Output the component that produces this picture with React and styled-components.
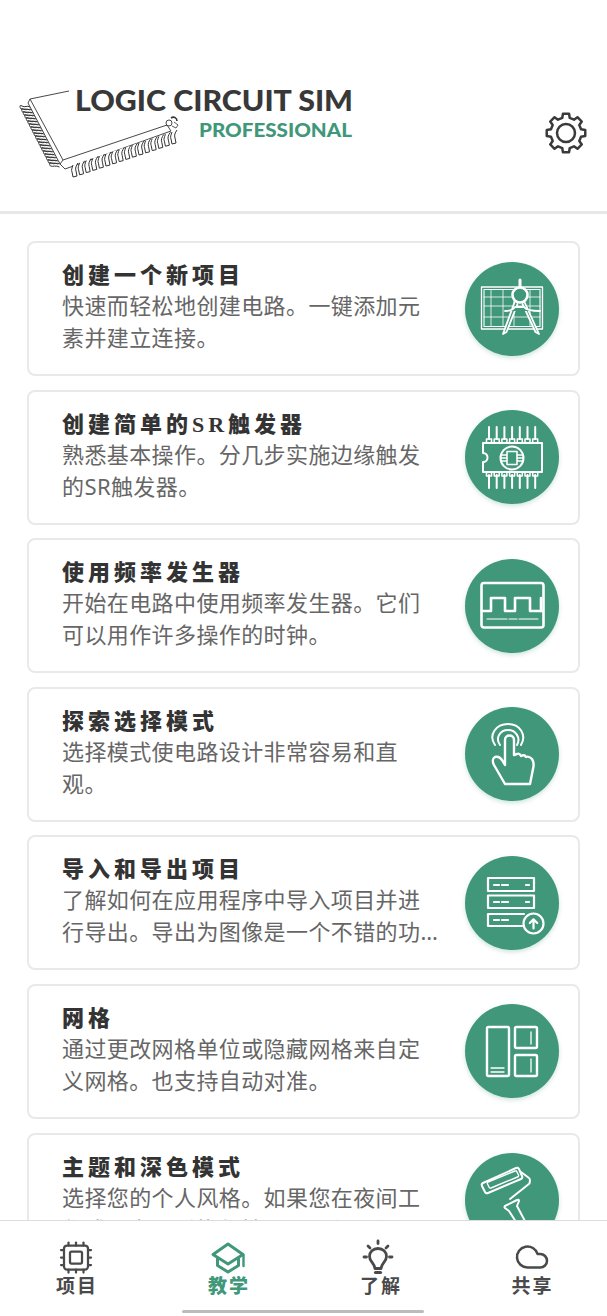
import React from "react";
import styled, { createGlobalStyle } from "styled-components";
import { Cloud, Cpu } from "lucide-react";

const GREEN = "#41977a";
const INK = "#3a3a3a";

const GlobalStyle = createGlobalStyle`
  html, body {
    margin: 0;
    padding: 0;
    background: #fff;
  }
  * {
    box-sizing: border-box;
  }
`;

const Screen = styled.div`
  width: 607px;
  height: 1316px;
  display: flex;
  flex-direction: column;
  overflow: hidden;
  background: #fff;
  font-family: "Noto Sans", "Noto Sans CJK SC", sans-serif;
`;

const Header = styled.header`
  flex: none;
  height: 214px;
  display: flex;
  align-items: flex-start;
  justify-content: space-between;
  padding: 85px 19px 0 16px;
  border-bottom: 3px solid #e8e8e8;
`;

const GearButton = styled.div`
  width: 44px;
  height: 44px;
  margin-top: 26px;
  color: ${INK};
`;

const List = styled.main`
  flex: 1;
  min-height: 0;
  overflow: hidden;
  display: flex;
  flex-direction: column;
  gap: 13.6px;
  padding: 27px 27px 0;
`;

const Card = styled.article`
  flex: none;
  height: 135px;
  display: flex;
  align-items: center;
  justify-content: space-between;
  padding: 0 19px 0 33px;
  border: 2px solid #e9e9e9;
  border-radius: 8px;
  background: #fff;
`;

const CardText = styled.div`
  width: 378px;
  margin-top: -6px;
`;

const CardTitle = styled.h2`
  margin: 2px 0 -2px;
  font-family: "Liberation Serif", "Noto Sans CJK SC", serif;
  font-size: 22px;
  font-weight: 900;
  line-height: 31px;
  letter-spacing: 4px;
  color: #333;
`;

const CardBody = styled.p`
  margin: 0;
  font-size: 22px;
  font-weight: 400;
  line-height: 32px;
  letter-spacing: 0.4px;
  color: #666;
  display: -webkit-box;
  -webkit-box-orient: vertical;
  -webkit-line-clamp: 2;
  overflow: hidden;
`;

const IconCircle = styled.div`
  flex: none;
  width: 94px;
  height: 94px;
  display: flex;
  align-items: center;
  justify-content: center;
  border-radius: 50%;
  background: ${GREEN};
  box-shadow: 0 2px 4px rgba(65, 151, 122, 0.25);
  color: #fff;
`;

const Nav = styled.nav`
  flex: none;
  height: 96px;
  display: grid;
  grid-template-columns: 152px 152px 152px 151px;
  border-top: 1px solid #dcdcdc;
  background: #fff;
  position: relative;
`;

const NavItem = styled.div`
  display: flex;
  flex-direction: column;
  align-items: center;
  padding-top: 18px;
  color: ${(p) => (p.$active ? GREEN : "#4a4a4a")};
`;

const NavIconBox = styled.div`
  width: 36px;
  height: 36px;
  display: flex;
  align-items: center;
  justify-content: center;
`;

const NavLabel = styled.span`
  margin-top: -2px;
  margin-right: -2px;
  font-family: "Noto Sans CJK SC", sans-serif;
  font-size: 19px;
  font-weight: ${(p) => (p.$active ? 900 : 700)};
  line-height: 24px;
  letter-spacing: 2px;
`;

const HomeBar = styled.div`
  position: absolute;
  left: 182px;
  bottom: 3px;
  width: 242px;
  height: 3px;
  border-radius: 2px;
  background: #bcbcbc;
`;

const Line = (props) => (
  <svg
    viewBox="0 0 64 64"
    width="64"
    height="64"
    fill="none"
    stroke="currentColor"
    strokeWidth="2"
    strokeLinecap="round"
    strokeLinejoin="round"
    style={{ overflow: "visible" }}
    {...props}
  />
);

const range = (n) => Array.from({ length: n }, (_, i) => i);

const BlueprintIcon = () => (
  <Line>
    <path d="M1.500 10h61v42h-61z" strokeWidth="1.300" />
    <path d="M4 12.500h56v37H4z" strokeWidth="1.100" />
    <path d="M4 20h56M4 29h56M4 40h56M11 12.500v37M23 12.500v37M34 12.500v37M50 12.500v37" strokeWidth="0.800" />
    <path d="M40 3v6" strokeWidth="3" />
    <path d="M35 24 23 57l3.500-2 11-28M44 24l15 33-3.500-2-13-28" fill={GREEN} strokeWidth="1.800" />
    <circle cx="40" cy="18" r="7.500" fill={GREEN} strokeWidth="2.600" />
    <path d="M25 34c5 0 8-1 10-4h9c2 3 6 4 16 4" fill={GREEN} strokeWidth="1.800" />
  </Line>
);

const ChipIcon = () => (
  <Line>
    {range(7).map((i) => (
      <g key={i}>
        <path d={`M${9 + i * 7.7} 2v12M${9 + i * 7.7} 50v13`} strokeWidth="2" />
        <path d={`M${6.5 + i * 7.7} 18v-4h5v4M${6.5 + i * 7.7} 47v4h5v-4`} strokeWidth="1.500" />
      </g>
    ))}
    <path d="M3 18h59v29H3v-10a4.500 4.500 0 0 0 0-9z" strokeWidth="2" />
    <circle cx="32" cy="33" r="11.500" strokeWidth="2" />
    <path d="M27 26.500h10v13H27zM21 30h6M21 33h6M21 36h6M37 30h6M37 33h6M37 36h6" strokeWidth="1.600" />
  </Line>
);

const WaveIcon = () => (
  <Line>
    <rect x="1.500" y="9" width="62" height="44.500" rx="2.500" strokeWidth="2.600" />
    <path d="M2 37h9V24h14v13h10V24h15v13h13" strokeWidth="2.600" />
    <path d="M61 24v13" strokeWidth="2.600" />
    <path d="M7 45h20M29 45h8M39 45h19" strokeWidth="1.200" />
  </Line>
);

const TapIcon = () => (
  <Line>
    <path d="M25 62 14 43c-2-4-1-7 1-8 3-1 5 0 7 3l3 5V18c0-6 9-6 9 0v15l3-1c2-1 3 0 4 2 2-1 4-1 5 1 2-1 4 0 6 2 2 3 2 6 1 10l-3 15z" strokeWidth="2.400" />
    <path d="M15 23C8 13 16 2 28 2s19 11 13 21" strokeWidth="2" />
    <path d="M20 23c-5-7 0-15 8-15s13 8 9 15" strokeWidth="2" />
  </Line>
);

const ServerIcon = () => (
  <Line>
    <path d="M8 7h46v13H8zM8 24.500h46V37H8zM44 43H8v12h34" strokeWidth="2.200" />
    <path d="M14 14h5M22 14h6M46 14h3M14 31h5M22 31h6M46 31h3M14 49h5M22 49h6" strokeWidth="2.200" />
    <circle cx="53.500" cy="52.500" r="10" fill={GREEN} strokeWidth="2.200" />
    <path d="M53.500 57.500v-9M49.800 52 53.500 48.300 57.200 52" strokeWidth="2.200" />
  </Line>
);

const PanelsIcon = () => (
  <Line>
    <rect x="7" y="8" width="22" height="49" rx="1.500" strokeWidth="2.400" />
    <rect x="35" y="8" width="22" height="21" rx="1.500" strokeWidth="2.400" />
    <rect x="35" y="36" width="22" height="21" rx="1.500" strokeWidth="2.400" />
    <path d="M11 49h13M11 53h13M51 13v12M51 40v13" strokeWidth="1.300" />
  </Line>
);

const RollerIcon = () => (
  <Line>
    <path d="M3 15 36 0q2-1 3 1l3 7q1 2-1 3L8 25q-2 1-3-1l-3-6q-1-2 1-3z" strokeWidth="2" />
    <path d="M8 14 35 3q1.500-.5 2 1l1.500 3q.5 1.500-1 2L11 20q-1.500.5-2-1l-1.500-3q-.5-1.500.5-2z" strokeWidth="1.400" />
    <path d="M41 4l8 6q1.500 1 .5 5.500L30 31" strokeWidth="2" />
    <path d="M25 38l12-6q2-1 2 1l-2 5 9 17M25 38q-1 1 0 2l4 3 9 14" strokeWidth="2" />
  </Line>
);

// gear outline built from eight evenly spaced teeth, one pointing straight up
const gearPath = () => {
  const pt = (r, deg) => {
    const a = ((deg - 90) * Math.PI) / 180;
    return `${(22 + r * Math.cos(a)).toFixed(2)} ${(22 + r * Math.sin(a)).toFixed(2)}`;
  };
  const parts = range(8).flatMap((i) => {
    const a = i * 45;
    return [pt(15.5, a - 14), pt(19.5, a - 9), pt(19.5, a + 9), pt(15.5, a + 14)];
  });
  return `M${parts.join("L")}Z`;
};

const GearIcon = () => (
  <svg viewBox="0 0 44 44" width="44" height="44" fill="none" stroke="currentColor" strokeWidth="2.500" strokeLinejoin="round">
    <path d={gearPath()} />
    <circle cx="22" cy="22" r="9" />
  </svg>
);

const CapIcon = () => (
  <svg viewBox="0 0 36 36" width="36" height="36" fill="none" stroke="currentColor" strokeWidth="3" strokeLinejoin="round" strokeLinecap="round">
    <path d="M18 5 3 15.500 18 25l15-9.500z" />
    <path d="M7.500 19v7.500L18 33l10.500-6.500V19" />
    <path d="M33.500 16v11" strokeWidth="2.400" />
  </svg>
);

const BulbIcon = () => (
  <svg viewBox="0 0 36 36" width="36" height="36" fill="none" stroke="currentColor" strokeWidth="2.800" strokeLinecap="round" strokeLinejoin="round">
    <path d="M16 2v2.500M6 7l2 2M26 7l-2 2M2 18h2.500M27.500 18H30" />
    <path d="M16 9.500c-5 0-8.500 3.500-8.500 8 0 5 5 6.500 5.500 12h6c.5-5.500 5.500-7 5.500-12 0-4.500-3.500-8-8.500-8z" />
    <path d="M13.500 33.500h5" strokeWidth="3.200" />
  </svg>
);

const ChipLogo = () => (
  <svg viewBox="0 0 340 100" width="340" height="100" fill="none" stroke="#333" strokeLinejoin="round">
    <path d="M53 6 14 14 47 75 151 40" strokeWidth="0.900" />
    <path d="M14 14 12 18 44 79 47 75M44 79l5 5 106-38-4-6" strokeWidth="0.900" />
    {range(20).map((i) => (
      <path
        key={`l${i}`}
        d={`M${14 + i * 1.55} ${22 + i * 3}c-3-2-5 1-8-1s-2 2-1 3c3 1 5-1 9 1`}
        strokeWidth="1"
      />
    ))}
    {range(16).map((i) => (
      <path
        key={`b${i}`}
        d={`M${57 + i * 6.6} ${80 - i * 2.2}c-1 3-2 5-1 7l1 5 4-1-1-5c-1-3 0-5 2-8`}
        fill="#fff"
        strokeWidth="1"
      />
    ))}
    <circle cx="153" cy="38" r="3" strokeWidth="0.900" />
    <path d="M155 33c3-2 6 0 6 3" strokeWidth="1.600" />
    <path d="M158 37l4 3-2 3-4-2" strokeWidth="0.800" />
    <text x="59" y="26" textLength="278" lengthAdjust="spacingAndGlyphs" fill="#383838" stroke="none" fontFamily="Lato, sans-serif" fontWeight="900" fontSize="29">
      LOGIC CIRCUIT SIM
    </text>
    <text x="183" y="52" textLength="153" lengthAdjust="spacingAndGlyphs" fill={GREEN} stroke="none" fontFamily="Lato, sans-serif" fontWeight="900" fontSize="19">
      PROFESSIONAL
    </text>
  </svg>
);

const lessons = [
  { title: "创建一个新项目", body: "快速而轻松地创建电路。一键添加元素并建立连接。", Icon: BlueprintIcon },
  { title: "创建简单的SR触发器", body: "熟悉基本操作。分几步实施边缘触发的SR触发器。", Icon: ChipIcon },
  { title: "使用频率发生器", body: "开始在电路中使用频率发生器。它们可以用作许多操作的时钟。", Icon: WaveIcon },
  { title: "探索选择模式", body: "选择模式使电路设计非常容易和直观。", Icon: TapIcon },
  { title: "导入和导出项目", body: "了解如何在应用程序中导入项目并进行导出。导出为图像是一个不错的功能，值得一试。", Icon: ServerIcon },
  { title: "网格", body: "通过更改网格单位或隐藏网格来自定义网格。也支持自动对准。", Icon: PanelsIcon },
  { title: "主题和深色模式", body: "选择您的个人风格。如果您在夜间工作或不为人后悔保持，可以使用深", Icon: RollerIcon },
];

const tabs = [
  { label: "项目", icon: <Cpu size={37} strokeWidth={1.5} /> },
  { label: "教学", icon: <CapIcon />, active: true },
  { label: "了解", icon: <BulbIcon /> },
  { label: "共享", icon: <Cloud size={38} strokeWidth={1.7} /> },
];

export default function App() {
  return (
    <Screen>
      <GlobalStyle />
      <Header>
        <ChipLogo />
        <GearButton>
          <GearIcon />
        </GearButton>
      </Header>
      <List>
        {lessons.map(({ title, body, Icon }) => (
          <Card key={title}>
            <CardText>
              <CardTitle>{title}</CardTitle>
              <CardBody>{body}</CardBody>
            </CardText>
            <IconCircle>
              <Icon />
            </IconCircle>
          </Card>
        ))}
      </List>
      <Nav>
        {tabs.map((tab) => (
          <NavItem key={tab.label} $active={tab.active}>
            <NavIconBox>{tab.icon}</NavIconBox>
            <NavLabel $active={tab.active}>{tab.label}</NavLabel>
          </NavItem>
        ))}
        <HomeBar />
      </Nav>
    </Screen>
  );
}
